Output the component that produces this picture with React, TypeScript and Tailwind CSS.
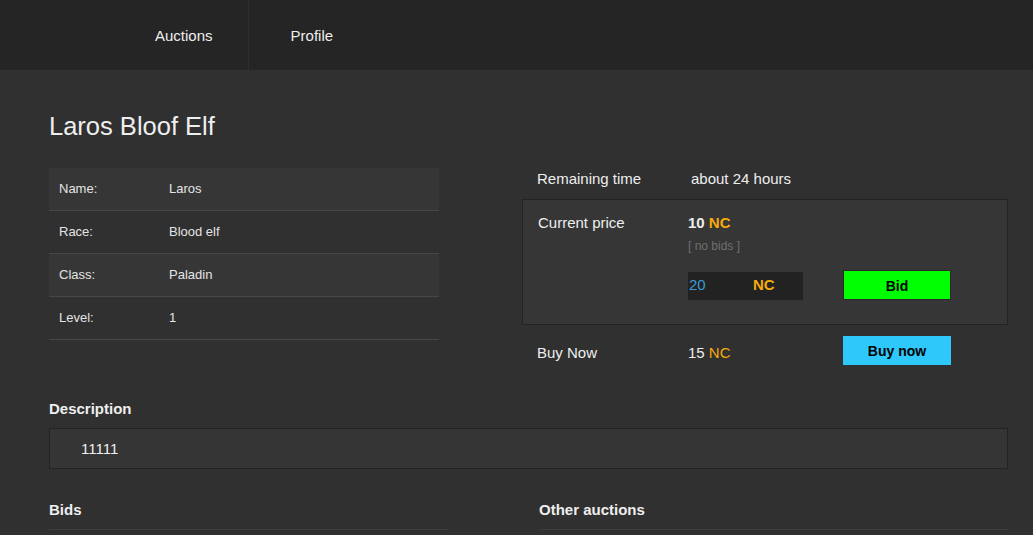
const DETAILS = [
  { label: 'Name:', value: 'Laros' },
  { label: 'Race:', value: 'Blood elf' },
  { label: 'Class:', value: 'Paladin' },
  { label: 'Level:', value: '1' },
]

function Nav() {
  return (
    <nav className="h-[70px] bg-[#252525] flex items-stretch pl-[113px] text-[15px] text-[#eeeeee]">
      <a className="flex items-center pt-[2px] pl-[42px] pr-[35px] border-r border-[#2e2e2e]">Auctions</a>
      <a className="flex items-center pt-[2px] pl-[42px] pr-[42px]">Profile</a>
    </nav>
  )
}

export default function App() {
  return (
    <div
      className="min-h-screen bg-[#303030] text-[#eeeeee]"
      style={{ fontFamily: '"Liberation Sans", Arial, sans-serif' }}
    >
      <Nav />
      <main className="pl-[49px] pr-[25px] pt-[42px]">
        <h1 className="text-[25.5px] leading-[29px]">Laros Bloof Elf</h1>

        <div className="flex mt-[27px]">
          <div className="w-[390px]">
            {DETAILS.map((row, i) => (
              <div
                key={row.label}
                className={`flex items-center h-[43px] border-b border-[#484848] text-[13px] text-[#e4e4e4] ${i % 2 === 0 ? 'bg-[#363636]' : ''}`}
              >
                <span className="w-[120px] pl-[10px]">{row.label}</span>
                <span>{row.value}</span>
              </div>
            ))}
          </div>

          <div className="ml-auto w-[486px] text-[15px]">
            <div className="flex items-center h-[22px] pl-[15px]">
              <span className="w-[154px]">Remaining time</span>
              <span>about 24 hours</span>
            </div>

            <div className="mt-[9px] h-[126px] border border-[#232323] bg-[#363636] pl-[15px] pt-[14px]">
              <div className="flex">
                <span className="w-[150px] leading-[17px]">Current price</span>
                <div className="flex flex-col">
                  <span className="font-bold leading-[17px]">
                    10 <span className="text-[#f5aa0a]">NC</span>
                  </span>
                  <span className="mt-[8px] text-[12px] leading-[14px] text-[#6f6f6f]">[ no bids ]</span>
                  <div className="flex items-center mt-[17px]">
                    <div className="flex items-center w-[115px] h-[28px] mt-[1px] bg-[#222222]">
                      <span className="w-[65px] pl-[1px] text-[#3a9bd5]">20</span>
                      <span className="font-bold text-[#f5aa0a]">NC</span>
                    </div>
                    <button className="ml-[40px] w-[108px] h-[30px] pt-[2px] bg-[#00ff00] border border-[#2a2a2a] text-black font-bold text-[14px]">
                      Bid
                    </button>
                  </div>
                </div>
              </div>
            </div>

            <div className="flex items-center mt-[11px] pl-[15px]">
              <span className="w-[151px] pt-[5px]">Buy Now</span>
              <span className="w-[155px] pt-[5px]">
                15 <span className="text-[#f5aa0a]">NC</span>
              </span>
              <button className="w-[108px] h-[29px] pt-[2px] bg-[#2ec8fa] text-black font-bold text-[14px]">
                Buy now
              </button>
            </div>
          </div>
        </div>

        <h2 className="mt-[35px] text-[15px] font-bold leading-[17px]">Description</h2>
        <div className="mt-[11px] h-[41px] flex items-center border border-[#232323] bg-[#353535] pl-[31px] pt-[1px] text-[15px]">
          11111
        </div>

        <div className="flex mt-[32px]">
          <div className="w-[400px]">
            <h2 className="text-[15px] font-bold leading-[17px]">Bids</h2>
            <div className="mt-[11px] border-t border-[#3e3e3e] h-[20px]" />
          </div>
          <div className="ml-auto w-[469px]">
            <h2 className="text-[15px] font-bold leading-[17px]">Other auctions</h2>
            <div className="mt-[11px] border-t border-[#3e3e3e] h-[20px]" />
          </div>
        </div>
      </main>
    </div>
  )
}
